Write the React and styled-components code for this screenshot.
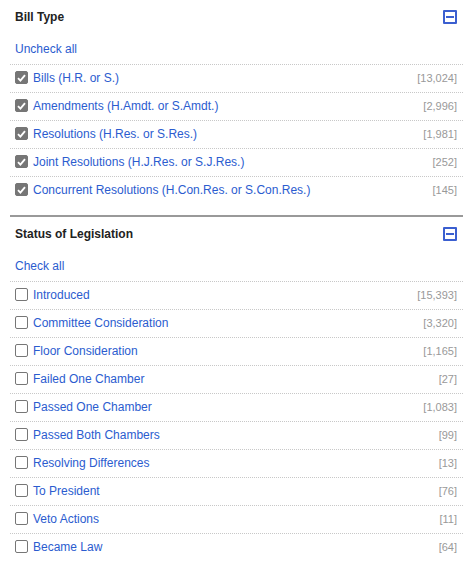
import React, { useState } from "react";
import styled, { createGlobalStyle } from "styled-components";

const GlobalStyle = createGlobalStyle`
  body {
    margin: 0;
    background: #fff;
    font-family: "Liberation Sans", Arial, sans-serif;
  }
`;

const Panel = styled.div`
  padding: 0 6px 0 10px;
  width: 469px;
  box-sizing: border-box;
`;

const Section = styled.section`
  padding-bottom: ${(p) => (p.$last ? "0" : "11px")};
  border-bottom: ${(p) => (p.$last ? "none" : "2px solid #999")};
`;

const Header = styled.div`
  height: 32px;
  box-sizing: border-box;
  display: flex;
  align-items: center;
  justify-content: space-between;
  padding: 2px 6px 0 5px;
`;

const Title = styled.h2`
  margin: 0;
  font-size: 12px;
  font-weight: bold;
  color: #222;
`;

const CollapseButton = styled.button`
  width: 14px;
  height: 14px;
  padding: 0;
  border: 2px solid #3b5fd0;
  border-radius: 1px;
  background: #fff;
  display: flex;
  align-items: center;
  justify-content: center;
  cursor: pointer;

  &::after {
    content: "";
    width: 8px;
    height: 2px;
    background: #3b5fd0;
  }
`;

const ToggleRow = styled.div`
  height: 32px;
  box-sizing: border-box;
  display: flex;
  align-items: center;
  padding: 2px 0 0 5px;
`;

const Link = styled.a`
  font-size: 12px;
  color: #2b5ccf;
  text-decoration: none;
  cursor: pointer;
`;

const List = styled.ul`
  list-style: none;
  margin: 0;
  padding: 0;
`;

const Row = styled.li`
  height: 27px;
  box-sizing: border-box;
  border-top: 1px dotted #c8c8c8;
  display: flex;
  align-items: center;
  justify-content: space-between;
  padding: 0 6px 2px 5px;
  height: 28px;
`;

const Label = styled.label`
  display: flex;
  align-items: center;
  gap: 5px;
  cursor: pointer;
`;

const Box = styled.span`
  width: 13px;
  height: 13px;
  box-sizing: border-box;
  border-radius: 2px;
  border: 1px solid #767676;
  background: ${(p) => (p.$checked ? "#767676" : "#fff")};
  display: flex;
  align-items: center;
  justify-content: center;
`;

const Count = styled.span`
  font-size: 11px;
  color: #999;
`;

const Check = () => (
  <svg width="9" height="8" viewBox="0 0 9 8">
    <path d="M1 4.2 L3.4 6.6 L8 1.2" fill="none" stroke="#fff" strokeWidth="1.9" />
  </svg>
);

const billTypes = [
  ["Bills (H.R. or S.)", "13,024"],
  ["Amendments (H.Amdt. or S.Amdt.)", "2,996"],
  ["Resolutions (H.Res. or S.Res.)", "1,981"],
  ["Joint Resolutions (H.J.Res. or S.J.Res.)", "252"],
  ["Concurrent Resolutions (H.Con.Res. or S.Con.Res.)", "145"],
];

const statuses = [
  ["Introduced", "15,393"],
  ["Committee Consideration", "3,320"],
  ["Floor Consideration", "1,165"],
  ["Failed One Chamber", "27"],
  ["Passed One Chamber", "1,083"],
  ["Passed Both Chambers", "99"],
  ["Resolving Differences", "13"],
  ["To President", "76"],
  ["Veto Actions", "11"],
  ["Became Law", "64"],
];

const Facet = ({ title, items, initial, last }) => {
  const [checked, setChecked] = useState(items.map(() => initial));
  const allChecked = checked.every(Boolean);
  return (
    <Section $last={last}>
      <Header>
        <Title>{title}</Title>
        <CollapseButton aria-label="Collapse" />
      </Header>
      <ToggleRow>
        <Link onClick={() => setChecked(items.map(() => !allChecked))}>
          {allChecked ? "Uncheck all" : "Check all"}
        </Link>
      </ToggleRow>
      <List>
        {items.map(([label, count], i) => (
          <Row key={label}>
            <Label
              onClick={() =>
                setChecked(checked.map((c, j) => (j === i ? !c : c)))
              }
            >
              <Box $checked={checked[i]}>{checked[i] && <Check />}</Box>
              <Link as="span">{label}</Link>
            </Label>
            <Count>[{count}]</Count>
          </Row>
        ))}
      </List>
    </Section>
  );
};

export default function App() {
  return (
    <>
      <GlobalStyle />
      <Panel>
        <Facet title="Bill Type" items={billTypes} initial={true} />
        <Facet title="Status of Legislation" items={statuses} initial={false} last />
      </Panel>
    </>
  );
}
